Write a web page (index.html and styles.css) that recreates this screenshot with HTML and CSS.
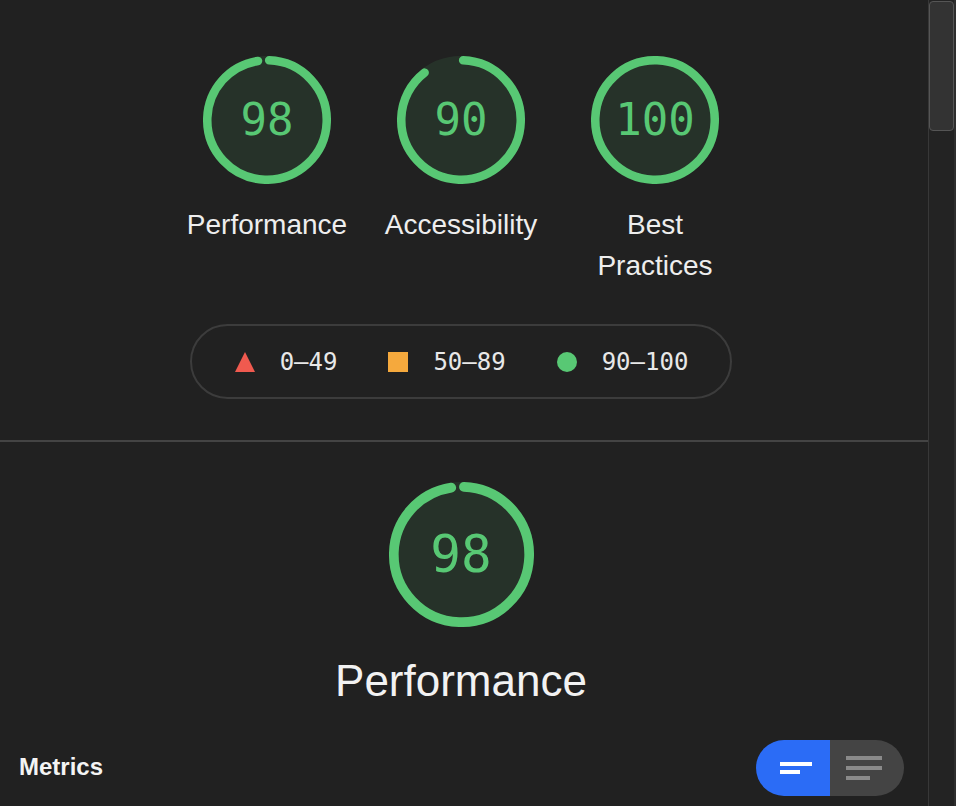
FILE: index.html
```html
<!DOCTYPE html>
<html lang="en">
<head>
<meta charset="utf-8">
<title>Lighthouse Report</title>
<link rel="stylesheet" href="styles.css">
</head>
<body>
<div class="page">
  <main class="report">
    <section class="summary">
      <div class="gauges">
        <div class="gauge">
          <div class="gauge-dial">
            <svg class="gauge-svg" viewBox="0 0 120 120">
              <circle class="gauge-base" cx="60" cy="60" r="56" stroke-width="8"></circle>
              <circle class="gauge-arc" cx="60" cy="60" r="56" stroke-width="8" stroke-dasharray="340.82 351.86" transform="rotate(-87.95 60 60)"></circle>
            </svg>
            <span class="gauge-value">98</span>
          </div>
          <div class="gauge-label">Performance</div>
        </div>
        <div class="gauge">
          <div class="gauge-dial">
            <svg class="gauge-svg" viewBox="0 0 120 120">
              <circle class="gauge-base" cx="60" cy="60" r="56" stroke-width="8"></circle>
              <circle class="gauge-arc" cx="60" cy="60" r="56" stroke-width="8" stroke-dasharray="312.67 351.86" transform="rotate(-87.95 60 60)"></circle>
            </svg>
            <span class="gauge-value">90</span>
          </div>
          <div class="gauge-label">Accessibility</div>
        </div>
        <div class="gauge">
          <div class="gauge-dial">
            <svg class="gauge-svg" viewBox="0 0 120 120">
              <circle class="gauge-base" cx="60" cy="60" r="56" stroke-width="8"></circle>
              <circle class="gauge-arc" cx="60" cy="60" r="56" stroke-width="8" stroke-dasharray="351.86 351.86" transform="rotate(-87.95 60 60)"></circle>
            </svg>
            <span class="gauge-value">100</span>
          </div>
          <div class="gauge-label">Best Practices</div>
        </div>
      </div>
      <div class="legend">
        <div class="legend-item">
          <svg class="legend-icon" viewBox="0 0 20 20"><polygon class="shape-fail" points="10,0 20,20 0,20"></polygon></svg>
          <span class="legend-text">0–49</span>
        </div>
        <div class="legend-item">
          <svg class="legend-icon" viewBox="0 0 20 20"><rect class="shape-average" x="0" y="0" width="20" height="20"></rect></svg>
          <span class="legend-text">50–89</span>
        </div>
        <div class="legend-item">
          <svg class="legend-icon" viewBox="0 0 20 20"><circle class="shape-pass" cx="10" cy="10" r="10"></circle></svg>
          <span class="legend-text">90–100</span>
        </div>
      </div>
    </section>

    <section class="category">
      <div class="gauge-dial gauge-dial-big">
        <svg class="gauge-svg" viewBox="0 0 120 120">
          <circle class="gauge-base" cx="60" cy="60" r="56" stroke-width="8"></circle>
          <circle class="gauge-arc" cx="60" cy="60" r="56" stroke-width="8" stroke-dasharray="340.82 351.86" transform="rotate(-87.95 60 60)"></circle>
        </svg>
        <span class="gauge-value">98</span>
      </div>
      <div class="category-title">Performance</div>
      <div class="metrics-header">
        <h2 class="metrics-title">Metrics</h2>
        <div class="view-toggle">
          <button class="toggle-btn toggle-btn-active" type="button" aria-label="Compact view">
            <svg width="74" height="56" viewBox="0 0 74 56">
              <rect x="24" y="22" width="32" height="4" fill="#ffffff"></rect>
              <rect x="24" y="30" width="20" height="4" fill="#ffffff"></rect>
            </svg>
          </button>
          <button class="toggle-btn" type="button" aria-label="Expanded view">
            <svg width="74" height="56" viewBox="0 0 74 56">
              <rect x="16" y="16" width="36" height="4" fill="#8a8a8a"></rect>
              <rect x="16" y="26" width="36" height="4" fill="#8a8a8a"></rect>
              <rect x="16" y="36" width="24" height="4" fill="#8a8a8a"></rect>
            </svg>
          </button>
        </div>
      </div>
    </section>
  </main>
  <div class="scrollbar">
    <div class="scrollbar-thumb"></div>
  </div>
</div>
</body>
</html>
```

FILE: styles.css
```css
* {
  box-sizing: border-box;
}

html, body {
  margin: 0;
  padding: 0;
  background: #212121;
}

body {
  font-family: "Liberation Sans", Arial, Helvetica, sans-serif;
  color: #eeeeee;
}

.page {
  display: flex;
  height: 806px;
  overflow: hidden;
}

.report {
  flex: 0 0 928px;
  width: 928px;
}

/* ---------- summary ---------- */
.summary {
  padding: 56px 6px 41px 0;
}

.gauges {
  display: flex;
  justify-content: center;
  gap: 24px;
}

.gauge {
  width: 170px;
  display: flex;
  flex-direction: column;
  align-items: center;
}

.gauge-dial {
  display: grid;
  width: 128px;
  height: 128px;
  color: #58c874;
}

.gauge-dial > * {
  grid-area: 1 / 1;
}

.gauge-svg {
  width: 100%;
  height: 100%;
  display: block;
}

.gauge-base {
  fill: currentColor;
  stroke: currentColor;
  opacity: 0.1;
}

.gauge-arc {
  fill: none;
  stroke: currentColor;
  stroke-linecap: round;
}

.gauge-value {
  align-self: center;
  justify-self: center;
  font-family: "DejaVu Sans Mono", Menlo, monospace;
  font-size: 44px;
  line-height: 1;
  color: #58c874;
}

.gauge-label {
  margin-top: 20px;
  font-size: 28px;
  line-height: 41px;
  text-align: center;
  color: #eeeeee;
}

/* ---------- legend ---------- */
.legend {
  display: flex;
  align-items: center;
  gap: 51px;
  width: fit-content;
  height: 75px;
  margin: 38px auto 0;
  padding: 0 42px 0 43px;
  border: 2px solid #3c3c3c;
  border-radius: 40px;
}

.legend-item {
  display: flex;
  align-items: center;
  gap: 25px;
}

.legend-icon {
  width: 20px;
  height: 20px;
  display: block;
}

.shape-fail { fill: #f05a4f; }
.shape-average { fill: #f5a93d; }
.shape-pass { fill: #58c874; }

.legend-text {
  font-family: "DejaVu Sans Mono", Menlo, monospace;
  font-size: 24px;
  line-height: 28px;
  color: #e8e8e8;
}

/* ---------- category ---------- */
.category {
  border-top: 2px solid #444444;
  padding: 40px 6px 0 0;
  display: flex;
  flex-direction: column;
  align-items: center;
}

.gauge-dial-big {
  width: 145px;
  height: 145px;
}

.gauge-dial-big .gauge-value {
  font-size: 51px;
}

.category-title {
  margin-top: 28px;
  font-size: 44px;
  line-height: 52px;
  color: #f2f2f2;
}

.metrics-header {
  align-self: stretch;
  margin-top: 33px;
  padding: 0 18px 0 19px;
  display: flex;
  justify-content: space-between;
  align-items: center;
}

.metrics-title {
  margin: 0 0 2px;
  font-size: 24px;
  font-weight: bold;
  line-height: 28px;
  color: #f4f4f4;
}

.view-toggle {
  display: flex;
  width: 148px;
  height: 56px;
  border-radius: 28px;
  overflow: hidden;
}

.toggle-btn {
  flex: 0 0 74px;
  height: 56px;
  margin: 0;
  padding: 0;
  border: 0;
  background: #444444;
  display: block;
}

.toggle-btn svg {
  display: block;
}

.toggle-btn-active {
  background: #2b6cf6;
}

/* ---------- scrollbar ---------- */
.scrollbar {
  flex: 0 0 28px;
  height: 806px;
  background: #232323;
  border-left: 1px solid #383838;
  border-right: 2px solid #2e2e2e;
  padding-top: 1px;
}

.scrollbar-thumb {
  width: 25px;
  height: 130px;
  background: #333333;
  border: 1px solid #555555;
  border-radius: 4px;
}
```
